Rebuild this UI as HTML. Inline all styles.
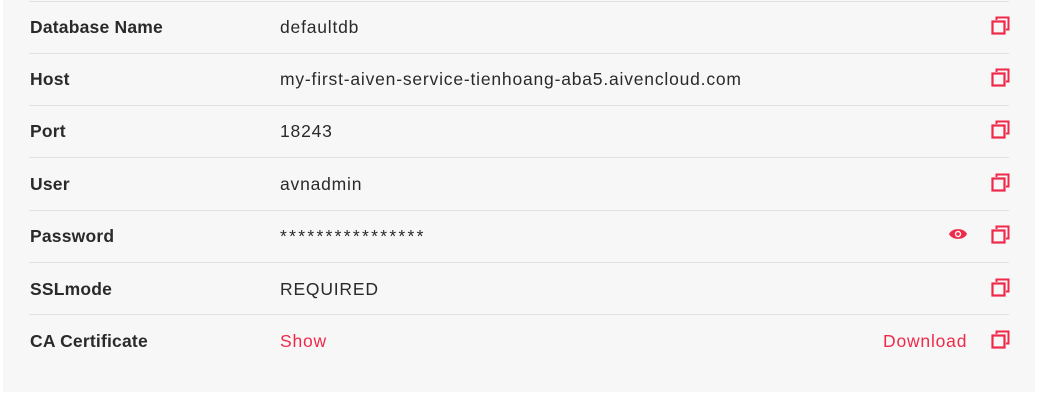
<!DOCTYPE html><html><head><style>
body{margin:0;background:#fff;width:1048px;height:408px;position:relative;font-family:"Liberation Sans",sans-serif;overflow:hidden}
.p{position:absolute;left:3px;top:0;width:1032px;height:392px;background:#f7f7f7}
.l{position:absolute;left:29px;width:980px;height:1px;background:#e1e1e1}
.r{position:absolute;left:0;width:1048px;height:20px;font-size:17.5px;color:#2a2a2a;letter-spacing:0.8px}
.k{position:absolute;left:30px;font-weight:bold;letter-spacing:0.2px}
.v{position:absolute;left:280px}
.red{color:#f0294a}
svg{position:absolute}
</style></head><body><div class="p"></div>
<div class="l" style="top:1px"></div><div class="l" style="top:53px"></div><div class="l" style="top:105px"></div><div class="l" style="top:157px"></div><div class="l" style="top:210px"></div><div class="l" style="top:262px"></div><div class="l" style="top:314px"></div>
<div class="r" style="top:17px"><span class="k">Database Name</span><span class="v">defaultdb</span></div>
<div class="r" style="top:69px"><span class="k">Host</span><span class="v">my-first-aiven-service-tienhoang-aba5.aivencloud.com</span></div>
<div class="r" style="top:121px"><span class="k">Port</span><span class="v">18243</span></div>
<div class="r" style="top:174px"><span class="k">User</span><span class="v">avnadmin</span></div>
<div class="r" style="top:226px"><span class="k">Password</span><span class="v" style="letter-spacing:2.3px">****************</span></div>
<div class="r" style="top:279px"><span class="k">SSLmode</span><span class="v">REQUIRED</span></div>
<div class="r" style="top:331px"><span class="k">CA Certificate</span><span class="v red">Show</span><span class="red" style="position:absolute;left:883px">Download</span></div>
<svg style="left:948px;top:227px" width="20" height="14" viewBox="0 0 20 14"><path d="M1 7C4 0.5 16 0.5 19 7C16 13.5 4 13.5 1 7Z" fill="#f0294a"/><circle cx="10" cy="7" r="3.2" fill="#f7f7f7"/><circle cx="10" cy="7" r="1.8" fill="#f0294a"/></svg>
<svg width="0" height="0"><defs><g id="c"><rect x="1.5" y="5.5" width="12" height="12" fill="none" stroke="#f0294a" stroke-width="2.2"/><path d="M5.5 4V1.5H17.5V13.5H15" fill="none" stroke="#f0294a" stroke-width="2"/></g></defs></svg>
<svg style="left:991px;top:16px" width="20" height="20"><use href="#c"/></svg>
<svg style="left:991px;top:68px" width="20" height="20"><use href="#c"/></svg>
<svg style="left:991px;top:120px" width="20" height="20"><use href="#c"/></svg>
<svg style="left:991px;top:173px" width="20" height="20"><use href="#c"/></svg>
<svg style="left:991px;top:225px" width="20" height="20"><use href="#c"/></svg>
<svg style="left:991px;top:278px" width="20" height="20"><use href="#c"/></svg>
<svg style="left:991px;top:330px" width="20" height="20"><use href="#c"/></svg>
</body></html>
